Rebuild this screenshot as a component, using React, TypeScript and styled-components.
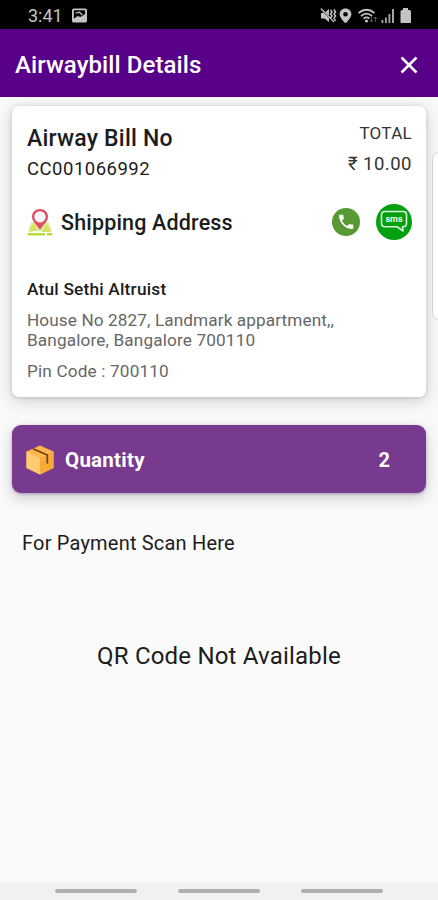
import React from "react";
import styled, { createGlobalStyle } from "styled-components";

const GlobalStyle = createGlobalStyle`
  * { box-sizing: border-box; }
  body { margin: 0; background: #fafafa; font-family: Roboto, sans-serif; }
`;

const Screen = styled.div`
  position: relative;
  display: flex;
  flex-direction: column;
  width: 438px;
  height: 900px;
  overflow: hidden;
  background: #fafafa;
`;

const StatusBar = styled.div`
  display: flex;
  align-items: center;
  justify-content: space-between;
  height: 29px;
  padding: 2px 26px 0 28px;
  background: #000;
  color: #c4c4c4;
`;

const StatusGroup = styled.div`
  display: flex;
  align-items: center;
`;

const Header = styled.header`
  position: relative;
  z-index: 1;
  display: flex;
  align-items: center;
  justify-content: space-between;
  height: 68px;
  padding: 3px 20px 0 15px;
  background: #58008a;
  color: #fff;
`;

const Content = styled.main`
  display: flex;
  flex-direction: column;
  flex: 1;
  padding: 9px 12px 0;
`;

const Card = styled.section`
  height: 291px;
  padding: 20px 14px 0 15px;
  border-radius: 7px;
  background: #fff;
  box-shadow: 0 4px 18px 2px rgba(0, 0, 0, 0.13), 0 1px 5px rgba(0, 0, 0, 0.16);
`;

const Row = styled.div<{ $height: number }>`
  display: flex;
  align-items: center;
  justify-content: space-between;
  height: ${(p) => p.$height}px;
`;

const Summary = styled.div`
  display: flex;
  justify-content: space-between;
`;

const SummaryColumn = styled.div<{ $end?: boolean }>`
  display: flex;
  flex-direction: column;
  align-items: ${(p) => (p.$end ? "flex-end" : "flex-start")};
`;

const Text = styled.span<{
  $size: number;
  $line: number;
  $weight?: number;
  $color?: string;
  $spacing?: number;
}>`
  display: block;
  margin: 0;
  white-space: nowrap;
  font-size: ${(p) => p.$size}px;
  line-height: ${(p) => p.$line}px;
  font-weight: ${(p) => p.$weight ?? 400};
  color: ${(p) => p.$color ?? "#1c1c1c"};
  letter-spacing: ${(p) => p.$spacing ?? 0}px;
`;

const AddressTitle = styled.div`
  display: flex;
  align-items: center;
  gap: 8px;
`;

const Actions = styled.div`
  display: flex;
  align-items: center;
  gap: 16px;
`;

const IconButton = styled.button`
  display: flex;
  padding: 0;
  border: 0;
  background: none;
  color: inherit;
`;

const Address = styled.div`
  display: flex;
  flex-direction: column;
  padding-top: 21px;
`;

const AddressLines = styled.div`
  padding: 10px 0;
`;

const QuantityBar = styled.section`
  display: flex;
  align-items: center;
  height: 68px;
  margin-top: 28px;
  padding: 2px 36px 0 14px;
  border-radius: 9px;
  background: #773a8f;
  box-shadow: 0 5px 14px 1px rgba(0, 0, 0, 0.17), 0 1px 3px rgba(88, 0, 138, 0.3);
`;

const QuantityLabel = styled.div`
  flex: 1;
  padding-left: 11px;
`;

const Payment = styled.section`
  display: flex;
  flex-direction: column;
  padding: 38px 0 0 10px;
`;

const QrMessage = styled.div`
  display: flex;
  justify-content: center;
  padding: 86px 10px 0 0;
`;

const EdgeHandle = styled.div`
  position: absolute;
  top: 152px;
  right: -8px;
  width: 14px;
  height: 168px;
  border: 1px solid #d2d2d2;
  border-radius: 7px;
  background: #fff;
`;

const NavBar = styled.nav`
  display: flex;
  justify-content: center;
  gap: 41px;
  height: 18px;
  padding-top: 7px;
  background: #f1f1f1;
`;

const NavMark = styled.span`
  width: 82px;
  height: 4px;
  border-radius: 2px;
  background: #b0b0b0;
`;

const PictureIcon = () => (
  <svg width="15" height="15" viewBox="0 0 16 15">
    <path fill="currentColor" fillRule="evenodd" d="M2 0H14Q16 0 16 2V13Q16 15 14 15H2Q0 15 0 13V2Q0 0 2 0ZM2 2V11L6 8L9 9L14 6V2Z" />
    <path fill="none" stroke="currentColor" strokeWidth="1.3" d="M4 5L8 4L11 7" />
  </svg>
);

const StatusIcons = () => (
  <svg width="92" height="18" viewBox="0 0 92 18" fill="currentColor">
    <path d="M0 2L9 11V15L4.5 11.5H1V6H3.5Z" />
    <path d="M5.5 5L9 2V8.5Z" />
    <path d="M1 1.5L14 15" stroke="currentColor" strokeWidth="1.2" />
    <path d="M10.5 3L12 5L10.5 7L12 9L10.5 11M14 2.5L15.5 5L14 7L15.5 9L14 11L15.5 14" fill="none" stroke="currentColor" strokeWidth="1.5" />
    <path fillRule="evenodd" d="M25.5 1.5C22 1.5 19.6 4 19.6 7.2C19.6 11 25.5 16.2 25.5 16.2S31.4 11 31.4 7.2C31.4 4 29 1.5 25.5 1.5ZM25.5 5A2.3 2.3 0 1 1 25.5 9.6A2.3 2.3 0 1 1 25.5 5Z" />
    <g fill="none" stroke="currentColor" strokeWidth="1.7">
      <path d="M38.5 6Q46.5 -.5 54.5 6M41 9Q46.5 4.3 52 9M43.5 11.7Q46.5 9.2 49.5 11.7" />
    </g>
    <circle cx="46.5" cy="14" r="1.5" />
    <path d="M51.5 10V15M50 13L51.5 15L53 13M55.5 15V10M54 12L55.5 10L57 12" stroke="currentColor" strokeWidth=".7" fill="none" opacity=".55" />
    <path d="M61.5 13H63.3V16H61.5ZM65 10.5H66.8V16H65ZM68.5 7H70.3V16H68.5ZM72 2H74V16H72Z" opacity=".85" />
    <path d="M83 1H88V3H89.5Q91 3 91 4.5V15Q91 16 90 16H81.5Q80.5 16 80.5 15V4.5Q80.5 3 82 3H83Z" />
  </svg>
);

const CloseIcon = () => (
  <svg width="18" height="18" viewBox="0 0 18 18">
    <path d="M1.5 1.5L16.5 16.5M16.5 1.5L1.5 16.5" stroke="#fff" strokeWidth="2.5" />
  </svg>
);

const MapPinIcon = () => (
  <svg width="26" height="28" viewBox="0 0 26 28">
    <path d="M4 14H8L13 21L18 14H22L25 23H1Z" fill="#e3efaa" />
    <path d="M2 23L6 15L11 22L3 24ZM15 22L20 16L24 24H15Z" fill="#cbe667" />
    <path d="M1 26.2H18M20 26.2H25" stroke="#b6dd3c" strokeWidth="2.6" />
    <path d="M5 22L9 17M17 18L22 23" stroke="#f3d35b" strokeWidth="1.3" />
    <path d="M13 1C8.3 1 5 4.3 5 8.7C5 13.5 9.3 16 13 22C16.7 16 21 13.5 21 8.7C21 4.3 17.7 1 13 1Z" fill="#dc5164" />
    <circle cx="13" cy="8.8" r="5.6" fill="#f7f7fb" />
  </svg>
);

const PhoneIcon = () => (
  <svg width="28" height="28" viewBox="0 0 28 28">
    <circle cx="14" cy="14" r="14" fill="#579a35" />
    <path transform="translate(4.7 4.3) scale(.79)" fill="#fff" d="M6.6 10.8C8 13.6 10.4 16 13.2 17.4L15.4 15.2C15.7 14.9 16.1 14.8 16.4 15C17.5 15.3 18.7 15.6 20 15.6C20.6 15.6 21 16 21 16.6V20C21 20.6 20.6 21 20 21C10.6 21 3 13.4 3 4C3 3.4 3.4 3 4 3H7.5C8.1 3 8.5 3.4 8.5 4C8.5 5.2 8.7 6.4 9.1 7.6C9.2 7.9 9.1 8.3 8.8 8.6Z" />
  </svg>
);

const SmsIcon = () => (
  <svg width="36" height="36" viewBox="0 0 36 36">
    <circle cx="18" cy="18" r="18" fill="#05a010" />
    <path d="M9 7.5H27Q30.5 7.5 30.5 11V19Q30.5 22.7 27 22.7H26.5L27 27L21 22.7H9Q5.5 22.7 5.5 19V11Q5.5 7.5 9 7.5Z" fill="none" stroke="#d8f4d8" strokeWidth="1.6" strokeLinejoin="round" />
    <text x="18" y="17.7" textAnchor="middle" fontFamily="Roboto" fontSize="9" fontWeight="700" fill="#e9fbe9" textLength="17">sms</text>
  </svg>
);

const BoxIcon = () => (
  <svg width="28" height="30" viewBox="0 0 28 30">
    <path d="M14 .5L27.5 6.5V23L14 29.5L.5 23V6.5Z" fill="#ffb74b" />
    <path d="M.5 6.5L14 13V29.5L.5 23Z" fill="#ffcb72" />
    <path d="M14 13L27.5 6.5V23L14 29.5Z" fill="#f9a83a" />
    <path d="M7 3.7L21.3 10V18.5" fill="none" stroke="#68401f" strokeWidth="1.7" />
  </svg>
);

const Clock = styled(Text)`
  margin-right: 9px;
`;

const SectionTitle = styled(Text)`
  padding-top: 2px;
`;

export default function App() {
  return (
    <Screen>
      <GlobalStyle />
      <StatusBar>
        <StatusGroup>
          <Clock $size={18} $line={20} $color="#c4c4c4">3:41</Clock>
          <PictureIcon />
        </StatusGroup>
        <StatusIcons />
      </StatusBar>
      <Header>
        <Text as="h1" $size={24} $line={30} $weight={500} $color="#fff" $spacing={0.08}>Airwaybill Details</Text>
        <IconButton aria-label="Close"><CloseIcon /></IconButton>
      </Header>
      <Content>
        <Card>
          <Summary>
            <SummaryColumn>
              <Text $size={23} $line={26} $weight={500} $spacing={0.2}>Airway Bill No</Text>
              <Text $size={18.5} $line={34} $spacing={0.5}>CC001066992</Text>
            </SummaryColumn>
            <SummaryColumn $end>
              <Text $size={17} $line={15} $color="#333" $spacing={0.3}>TOTAL</Text>
              <Text $size={18.5} $line={46} $color="#333" $spacing={0.5}>₹ 10.00</Text>
            </SummaryColumn>
          </Summary>
          <Row $height={70}>
            <AddressTitle>
              <MapPinIcon />
              <SectionTitle $size={21.5} $line={26} $weight={500} $spacing={0.17}>Shipping Address</SectionTitle>
            </AddressTitle>
            <Actions>
              <IconButton aria-label="Call"><PhoneIcon /></IconButton>
              <IconButton aria-label="Send SMS"><SmsIcon /></IconButton>
            </Actions>
          </Row>
          <Address>
            <Text $size={17.3} $line={22} $weight={500} $spacing={0.2}>Atul Sethi Altruist</Text>
            <AddressLines>
              <Text $size={17.2} $line={20} $color="#666" $spacing={0.1}>House No 2827, Landmark appartment,,</Text>
              <Text $size={17.2} $line={20} $color="#666" $spacing={0.14}>Bangalore, Bangalore 700110</Text>
            </AddressLines>
            <Text $size={17.2} $line={22} $color="#666" $spacing={0.16}>Pin Code : 700110</Text>
          </Address>
        </Card>
        <QuantityBar>
          <BoxIcon />
          <QuantityLabel>
            <Text $size={20.5} $line={24} $weight={700} $color="#fff" $spacing={0.25}>Quantity</Text>
          </QuantityLabel>
          <Text $size={20} $line={24} $weight={700} $color="#fff">2</Text>
        </QuantityBar>
        <Payment>
          <Text $size={20} $line={25} $spacing={0.2}>For Payment Scan Here</Text>
          <QrMessage>
            <Text $size={24} $line={28} $spacing={0.2}>QR Code Not Available</Text>
          </QrMessage>
        </Payment>
      </Content>
      <NavBar>
        <NavMark />
        <NavMark />
        <NavMark />
      </NavBar>
      <EdgeHandle />
    </Screen>
  );
}
